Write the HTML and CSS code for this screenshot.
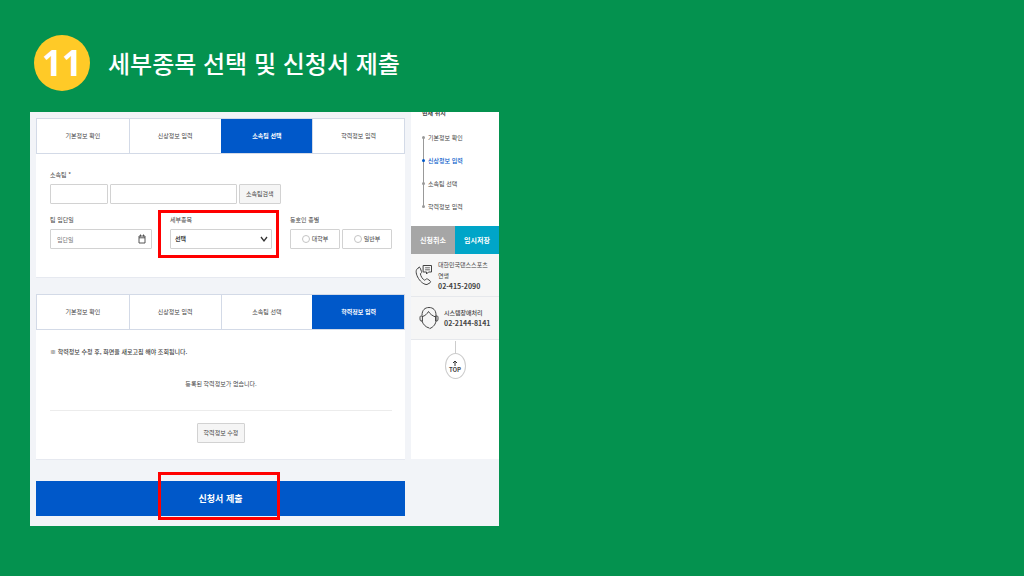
FILE: index.html
```html
<!DOCTYPE html>
<html lang="ko">
<head>
    <meta charset="UTF-8">
    <meta name="viewport" content="width=device-width, initial-scale=1.0">
    <title>세부종목 선택 및 신청서 제출</title>
    <link rel="stylesheet" href="styles.css">
</head>
<body>
    <header class="step-header">
        <span class="step-number">11</span>
        <h1>세부종목 선택 및 신청서 제출</h1>
    </header>

    <div class="screen">
        <main class="content">
            <section class="card">
                <nav class="tabs">
                    <a href="#">기본정보 확인</a>
                    <a href="#">신상정보 입력</a>
                    <a href="#" class="active">소속팀 선택</a>
                    <a href="#">학력정보 입력</a>
                </nav>
                <form class="team-form">
                    <label for="teamCode">소속팀 *</label>
                    <div class="team-row">
                        <input type="text" id="teamCode" class="team-code">
                        <input type="text" class="team-name" aria-label="소속팀">
                        <button type="button" class="small-button">소속팀검색</button>
                    </div>
                    <div class="fields">
                        <div class="field">
                            <label for="joinDate">팀 입단일</label>
                            <div class="control">
                                <input type="text" id="joinDate" placeholder="입단일">
                                <svg class="calendar" viewBox="0 0 8 10" fill="none" stroke="#444" stroke-width=".9">
                                    <path d="M1 2h6v7H1zM1 3.800h6M2.500 .5v2M5.500 .5v2"/>
                                </svg>
                            </div>
                        </div>
                        <div class="field marked">
                            <label for="event">세부종목</label>
                            <div class="control">
                                <select id="event">
                                    <option>선택</option>
                                </select>
                                <svg class="arrow" viewBox="0 0 8 6" fill="none" stroke="#333" stroke-width="1.3">
                                    <path d="M1 1l3 4 3-4"/>
                                </svg>
                            </div>
                        </div>
                        <div class="field">
                            <span class="label">동호인 종별</span>
                            <div class="radios">
                                <label><input type="radio" name="division">대학부</label>
                                <label><input type="radio" name="division">일반부</label>
                            </div>
                        </div>
                    </div>
                </form>
            </section>

            <section class="card">
                <nav class="tabs">
                    <a href="#">기본정보 확인</a>
                    <a href="#">신상정보 입력</a>
                    <a href="#">소속팀 선택</a>
                    <a href="#" class="active">학력정보 입력</a>
                </nav>
                <div class="education">
                    <p class="note">※ 학력정보 수정 후, 화면을 새로고침 해야 조회됩니다.</p>
                    <p class="empty">등록된 학력정보가 없습니다.</p>
                    <button type="button" class="small-button">학력정보 수정</button>
                </div>
            </section>

            <div class="submit-row">
                <button type="submit" class="submit">신청서 제출</button>
            </div>
        </main>

        <aside class="side">
            <h2>현재 위치</h2>
            <ul class="steps">
                <li>기본정보 확인</li>
                <li class="current">신상정보 입력</li>
                <li>소속팀 선택</li>
                <li>학력정보 입력</li>
            </ul>
            <div class="side-buttons">
                <button type="button" class="cancel">신청취소</button>
                <button type="button" class="save">임시저장</button>
            </div>
            <div class="contact">
                <svg class="phone" viewBox="0 0 18 22" fill="none" stroke="#444" stroke-linecap="round" stroke-linejoin="round">
                    <path d="M4 3.500L2.200 4.800C.4 6.500 1 10.500 3.500 14.500S9.500 20.700 12 20.500L15 18.800C15.800 18.200 15.700 17.400 15 16.800L12.500 15C11.800 14.600 11.200 14.800 10.700 15.500L9.800 16.300C8 15.800 5.500 12 5.400 9.800L6.200 9C6.800 8.500 6.700 8 6.400 7.300L5.300 4.200C5 3.400 4.600 3.200 4 3.500z"/>
                    <path d="M8.500 1.500h8v6.500h-3l-2 2v-2h-3z"/>
                    <path d="M10.500 3.800h4M10.500 5.800h4" stroke-width=".8"/>
                </svg>
                <div>
                    <p>대한민국댄스스포츠연맹</p>
                    <strong>02-415-2090</strong>
                </div>
            </div>
            <div class="contact system">
                <svg class="headset" viewBox="0 0 20 24" fill="none" stroke="#444" stroke-linecap="round" stroke-linejoin="round">
                    <path d="M3 9C3 4 6 1.500 10 1.500S17 4 17 9v5c0 4-2.500 7-6 8.500"/>
                    <path d="M3 15c1 3.500 3.500 6 7 7"/>
                    <path d="M3.500 10.500C6 10 8 8 9.500 5.500C11 8 13 9.500 16.500 11"/>
                    <path d="M3 10H2C1 10 1 11 1 12s0 3 1 3h1zM17 10h1c1 0 1 1 1 2s0 3-1 3h-1z"/>
                </svg>
                <div>
                    <p>시스템장애처리</p>
                    <strong>02-2144-8141</strong>
                </div>
            </div>
            <a href="#" class="top-link">
                <svg viewBox="0 0 6 6" fill="none" stroke="#333"><path d="M3 6V1M1 3l2-2 2 2"/></svg>
                <span>TOP</span>
            </a>
        </aside>
    </div>
</body>
</html>
```

FILE: styles.css
```css
* {
    box-sizing: border-box;
}

body {
    margin: 0;
    padding: 35px 30px;
    background-color: #04924f;
    font-family: "Noto Sans CJK KR", sans-serif;
    font-size: 6px;
    line-height: 10px;
    color: #444;
}

h1, h2, p, ul {
    margin: 0;
    padding: 0;
}

a {
    color: inherit;
    text-decoration: none;
}

input, select, button {
    font: inherit;
    color: inherit;
    margin: 0;
}

button {
    padding: 0;
    cursor: pointer;
}

.step-header {
    display: flex;
    align-items: center;
    gap: 18px;
    padding-left: 4px;
    margin-bottom: 21px;
    color: #fff;
}

.step-number {
    width: 56px;
    height: 56px;
    border-radius: 50%;
    background-color: #ffca27;
    font: bold 35px/56px "Noto Sans", sans-serif;
    text-align: center;
}

.step-header h1 {
    font-size: 24px;
    font-weight: 500;
    line-height: 36px;
}

.screen {
    display: flex;
    align-items: flex-start;
    gap: 6px;
    max-width: 469px;
    padding: 0 0 10px 6px;
    background-color: #f2f4f8;
    overflow: hidden;
}

.content {
    flex: 1;
    padding-top: 6px;
}

.card {
    margin-bottom: 16px;
    background-color: #fff;
    border-bottom: 1px solid #e6e9f0;
}

.tabs {
    display: grid;
    grid-template-columns: repeat(4, 1fr);
    border: 1px solid #d3dae7;
    line-height: 34px;
    text-align: center;
}

.tabs a + a {
    border-left: 1px solid #d3dae7;
}

.tabs .active {
    border-color: #0058c9;
    background-color: #0058c9;
    color: #fff;
    font-weight: bold;
}

.team-form {
    padding: 16px 13px 28px 14px;
}

.team-form label,
.label {
    display: block;
}

.team-form input[type="text"],
.team-form select {
    width: 100%;
    height: 20px;
    padding: 0 6px;
    border: 1px solid #d2d2d2;
    border-radius: 1px;
    background-color: #fff;
}

.team-form select {
    padding: 0 4px;
    appearance: none;
    font-weight: bold;
}

.team-row {
    display: flex;
    gap: 2px;
    margin: 4px 0 11px;
}

.team-form input.team-code {
    width: 58px;
}

.team-form input.team-name {
    width: 127px;
}

.small-button {
    height: 20px;
    padding: 0 6px;
    border: 1px solid #d2d2d2;
    border-radius: 1px;
    background-color: #f5f5f5;
    white-space: nowrap;
}

.fields {
    display: grid;
    grid-template-columns: repeat(3, 1fr);
    gap: 18px;
}

.control {
    position: relative;
    margin-top: 4px;
}

.calendar,
.arrow {
    position: absolute;
    top: 5px;
    right: 6px;
    width: 8px;
    height: 10px;
}

.arrow {
    right: 4px;
}

.marked {
    position: relative;
}

.marked::after,
.submit-row::after {
    content: "";
    position: absolute;
    border: 3px solid #f00;
    pointer-events: none;
}

.marked::after {
    inset: -5px -7px -9px -12px;
}

.radios {
    display: grid;
    grid-template-columns: 1fr 1fr;
    gap: 2px;
    margin-top: 4px;
}

.radios label {
    display: flex;
    align-items: center;
    justify-content: center;
    gap: 2px;
    height: 20px;
    border: 1px solid #d2d2d2;
    border-radius: 1px;
}

.radios input {
    width: 8px;
    height: 8px;
    appearance: none;
    border: 1px solid #c4c4c4;
    border-radius: 50%;
}

.education {
    padding: 17px 13px 16px 14px;
    text-align: center;
}

.note {
    text-align: left;
    font-weight: 500;
}

.empty {
    margin: 22px 0 12px;
    padding-bottom: 21px;
    border-bottom: 1px solid #ececec;
}

.submit-row {
    position: relative;
    margin-top: 21px;
}

.submit {
    display: block;
    width: 100%;
    height: 35px;
    border: 0;
    background-color: #0058c9;
    color: #fff;
    font-size: 9px;
    font-weight: bold;
}

.submit-row::after {
    inset: -9px 34% -4px 33%;
}

.side {
    width: 88px;
    height: 347px;
    background-color: #fff;
}

.side h2 {
    margin: -4px 0 8px 11px;
    font-size: 6px;
    font-weight: bold;
}

.steps {
    position: relative;
    padding-left: 17px;
    margin-bottom: 8px;
    list-style: none;
    line-height: 23px;
}

.steps::before {
    content: "";
    position: absolute;
    top: 11px;
    bottom: 11px;
    left: 12px;
    border-left: 1px solid #999;
}

.steps li {
    position: relative;
}

.steps li::before {
    content: "";
    position: absolute;
    top: 10px;
    left: -6px;
    width: 3px;
    height: 3px;
    border-radius: 50%;
    background-color: #999;
}

.steps .current {
    color: #0058c9;
    font-weight: 500;
}

.steps .current::before {
    background-color: #0058c9;
}

.side-buttons {
    display: grid;
    grid-template-columns: 1fr 1fr;
}

.side-buttons button {
    height: 28px;
    border: 0;
    color: #fff;
    font-size: 7px;
    font-weight: bold;
}

.side-buttons .cancel {
    background-color: #a6a6a6;
}

.side-buttons .save {
    background-color: #00a5c8;
}

.contact {
    display: flex;
    align-items: center;
    gap: 5px;
    height: 43px;
    padding: 0 9px 0 4px;
    border-bottom: 1px solid #e6e8ec;
    background-color: #f6f6f6;
    line-height: 11px;
}

.contact strong {
    display: block;
    font-size: 7px;
}

.phone {
    flex: none;
    width: 18px;
    height: 22px;
}

.headset {
    flex: none;
    width: 20px;
    height: 24px;
}

.system {
    padding: 0 0 0 8px;
    font-weight: 500;
}

.top-link {
    position: relative;
    display: flex;
    flex-direction: column;
    align-items: center;
    justify-content: center;
    gap: 1px;
    width: 21px;
    height: 26px;
    margin: 13px auto 0;
    border: 1px solid #ccc;
    border-radius: 50%;
    font-size: 6px;
    font-weight: bold;
    line-height: 6px;
}

.top-link::before {
    content: "";
    position: absolute;
    bottom: 100%;
    height: 13px;
    border-left: 1px solid #ccc;
}

.top-link svg {
    width: 6px;
    height: 6px;
}
```
